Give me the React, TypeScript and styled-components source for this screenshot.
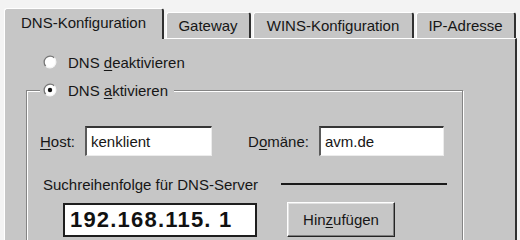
import React from "react";
import styled, { createGlobalStyle } from "styled-components";

const GRAY = "#c6c6c6";
const DARK = "#303030";

const GlobalStyle = createGlobalStyle`
  html, body { margin: 0; padding: 0; background: #f3f3f3; }
  body {
    font-family: "Liberation Sans", Arial, sans-serif;
    font-size: 15px;
    color: #161616;
    width: 520px;
    height: 240px;
    overflow: hidden;
  }
`;

const Dialog = styled.div`
  padding: 8px 0 0 4px;
  width: 513px;
  height: 232px;
  overflow: hidden;
`;

const TabRow = styled.div`
  display: flex;
  align-items: flex-end;
  gap: 2px;
  height: 30px;
  position: relative;
  z-index: 1;
`;

const Tab = styled.div<{ $active?: boolean; $w: number }>`
  box-sizing: border-box;
  width: ${(p) => p.$w}px;
  height: ${(p) => (p.$active ? 31 : 26)}px;
  margin-bottom: ${(p) => (p.$active ? -1 : 0)}px;
  padding-bottom: ${(p) => (p.$active ? 3 : 0)}px;
  background: ${GRAY};
  border-top: 1px solid #ffffff;
  border-left: 1px solid #ffffff;
  border-right: 2px solid ${DARK};
  border-radius: 3px 3px 0 0;
  display: flex;
  align-items: center;
  justify-content: center;
  white-space: nowrap;
`;

const Panel = styled.div`
  box-sizing: border-box;
  height: 202px;
  overflow: hidden;
  background: ${GRAY};
  border-top: 1px solid #ffffff;
  border-left: 1px solid #ffffff;
  border-right: 2px solid ${DARK};
  padding: 14px 0 0 21px;
`;

const RadioRow = styled.div`
  display: flex;
  align-items: center;
  gap: 11px;
  height: 18px;
  padding-left: 17px;
`;

const RadioSvg = styled.svg`
  display: block;
  flex: none;
`;

const Legend = styled.legend`
  display: flex;
  align-items: center;
  gap: 11px;
  height: 18px;
  padding: 0 6px 0 3px;
  background: ${GRAY};
`;

const Group = styled.fieldset`
  box-sizing: border-box;
  width: 437px;
  height: 170px;
  margin: 10px 0 0 0;
  padding: 27px 0 0 13px;
  border: 1px solid #848484;
  box-shadow: inset 1px 1px 0 #ffffff, 1px 1px 0 #ffffff;
  min-width: 0;
`;

const FieldRow = styled.div`
  display: flex;
  align-items: center;
  height: 30px;
`;

const Label = styled.span<{ $gap?: number }>`
  margin-left: ${(p) => p.$gap ?? 0}px;
  white-space: nowrap;
`;

const Key = styled.span`
  text-decoration: underline;
  text-underline-offset: 2px;
`;

const TextField = styled.div<{ $w: number }>`
  box-sizing: border-box;
  width: ${(p) => p.$w}px;
  height: 30px;
  margin-left: 10px;
  background: #ffffff;
  border-style: solid;
  border-width: 2px 1px 1px 2px;
  border-color: #363636 #ececec #ececec #5a5a5a;
  padding-left: 4px;
  display: flex;
  align-items: center;
`;

const SearchRow = styled.div`
  display: flex;
  align-items: center;
  height: 18px;
  margin-top: 19px;
  padding: 0 15px 0 3px;
`;

const Rule = styled.div`
  width: 166px;
  height: 2px;
  margin-left: auto;
  background: #1a1a1a;
`;

const IpRow = styled.div`
  display: flex;
  align-items: flex-start;
  margin-top: 9px;
`;

const IpBox = styled.div`
  box-sizing: border-box;
  width: 194px;
  height: 34px;
  margin: 1px 0 0 23px;
  background: #ffffff;
  border: 2px solid #1e1e1e;
  padding-left: 5px;
  display: flex;
  align-items: center;
  font-weight: bold;
  font-size: 22px;
  letter-spacing: 1.2px;
  white-space: pre;
  color: #111;
`;

const Button = styled.div`
  box-sizing: border-box;
  width: 108px;
  height: 35px;
  margin-left: 30px;
  background: ${GRAY};
  border: 1px solid;
  border-color: #ffffff #242424 #242424 #ffffff;
  box-shadow: inset -1px -1px 0 #7e7e7e, inset 1px 1px 0 #e2e2e2;
  display: flex;
  align-items: center;
  justify-content: center;
`;

function Radio({ checked }: { checked?: boolean }) {
  return (
    <RadioSvg width="14" height="14" viewBox="0 0 14 14">
      <circle cx="7" cy="7" r="6" fill="#ffffff" />
      <path d="M2.76 11.24 A6 6 0 0 1 11.24 2.76" fill="none" stroke="#777777" strokeWidth="1.3" />
      <path d="M11.24 2.76 A6 6 0 0 1 2.76 11.24" fill="none" stroke="#f4f4f4" strokeWidth="1.3" />
      {checked && <circle cx="7" cy="7" r="2.2" fill="#111" />}
    </RadioSvg>
  );
}

export default function App() {
  return (
    <>
      <GlobalStyle />
      <Dialog>
        <TabRow>
          <Tab $active $w={160}>DNS-Konfiguration</Tab>
          <Tab $w={85}>Gateway</Tab>
          <Tab $w={161}>WINS-Konfiguration</Tab>
          <Tab $w={100}>IP-Adresse</Tab>
        </TabRow>
        <Panel>
          <RadioRow>
            <Radio />
            <span>
              DNS <Key>d</Key>eaktivieren
            </span>
          </RadioRow>
          <Group>
            <Legend>
              <Radio checked />
              <span>
                DNS <Key>a</Key>ktivieren
              </span>
            </Legend>
            <FieldRow>
              <Label>
                <Key>H</Key>ost:
              </Label>
              <TextField $w={127}>kenklient</TextField>
              <Label $gap={36}>
                D<Key>o</Key>mäne:
              </Label>
              <TextField $w={125}>avm.de</TextField>
            </FieldRow>
            <SearchRow>
              <span>Suchreihenfolge für DNS-Server</span>
              <Rule />
            </SearchRow>
            <IpRow>
              <IpBox>{"192.168.115. 1"}</IpBox>
              <Button>
                <span>
                  Hin<Key>z</Key>ufügen
                </span>
              </Button>
            </IpRow>
          </Group>
        </Panel>
      </Dialog>
    </>
  );
}
